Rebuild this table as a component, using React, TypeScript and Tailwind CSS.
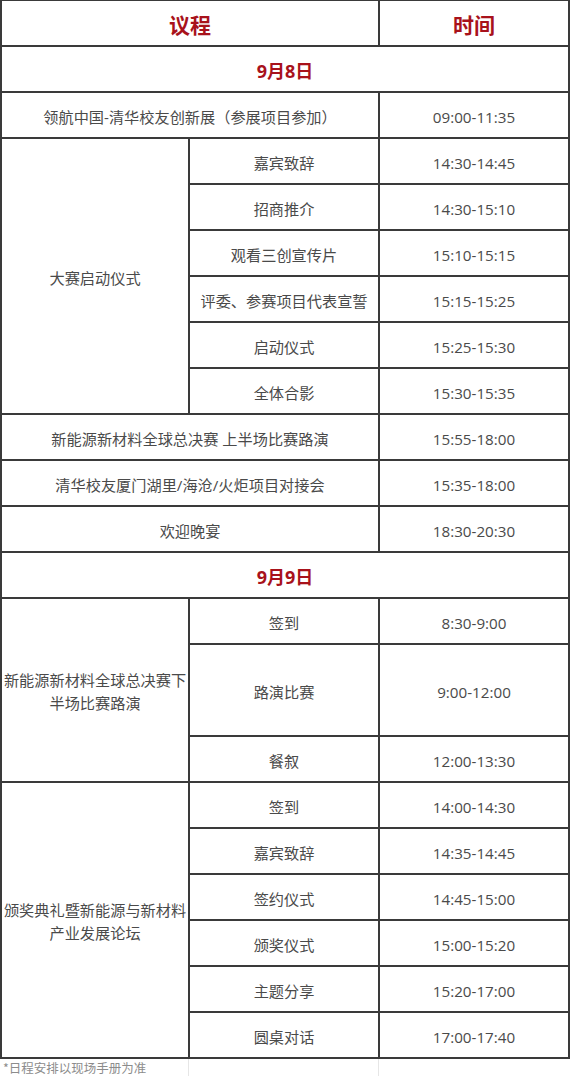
import React from "react";

const cell =
  "bg-white flex items-center justify-center text-center text-[15.2px] leading-[23px] text-[#4a4a4a] pt-[4px]";
const head =
  "bg-white flex items-center justify-center text-center text-[21px] font-bold text-[#a8121b] pt-[6px]";
const day =
  "bg-white flex items-center justify-center text-center text-[18px] font-bold text-[#a8121b] pt-[4px] col-span-3";

type Pair = [string, string];

const launch: Pair[] = [
  ["嘉宾致辞", "14:30-14:45"],
  ["招商推介", "14:30-15:10"],
  ["观看三创宣传片", "15:10-15:15"],
  ["评委、参赛项目代表宣誓", "15:15-15:25"],
  ["启动仪式", "15:25-15:30"],
  ["全体合影", "15:30-15:35"],
];

const award: Pair[] = [
  ["签到", "14:00-14:30"],
  ["嘉宾致辞", "14:35-14:45"],
  ["签约仪式", "14:45-15:00"],
  ["颁奖仪式", "15:00-15:20"],
  ["主题分享", "15:20-17:00"],
  ["圆桌对话", "17:00-17:40"],
];

export default function App() {
  return (
    <div
      className="w-[570px] h-[1076px] bg-white overflow-hidden"
      style={{ fontFamily: '"Open Sans", "Noto Sans CJK SC", sans-serif' }}
    >
      <div className="grid grid-cols-[186px_188px_188px] grid-rows-[repeat(23,44px)] gap-[2px] pt-[1px] px-[2px] pb-[2px] bg-[#3a3a3a]">
        <div className={`${head} col-span-2`}>议程</div>
        <div className={head}>时间</div>

        <div className={day}>9月8日</div>

        <div className={`${cell} col-span-2`}>领航中国-清华校友创新展（参展项目参加）</div>
        <div className={cell}>09:00-11:35</div>

        <div className={`${cell} row-span-6`}>大赛启动仪式</div>
        {launch.map(([a, t], i) => (
          <React.Fragment key={`l${i}`}>
            <div className={cell}>{a}</div>
            <div className={cell}>{t}</div>
          </React.Fragment>
        ))}

        <div className={`${cell} col-span-2`}>新能源新材料全球总决赛 上半场比赛路演</div>
        <div className={cell}>15:55-18:00</div>

        <div className={`${cell} col-span-2`}>清华校友厦门湖里/海沧/火炬项目对接会</div>
        <div className={cell}>15:35-18:00</div>

        <div className={`${cell} col-span-2`}>欢迎晚宴</div>
        <div className={cell}>18:30-20:30</div>

        <div className={day}>9月9日</div>

        <div className={`${cell} row-span-4`}>新能源新材料全球总决赛下半场比赛路演</div>
        <div className={cell}>签到</div>
        <div className={cell}>8:30-9:00</div>
        <div className={`${cell} row-span-2`}>路演比赛</div>
        <div className={`${cell} row-span-2`}>9:00-12:00</div>
        <div className={cell}>餐叙</div>
        <div className={cell}>12:00-13:30</div>

        <div className={`${cell} row-span-6`}>颁奖典礼暨新能源与新材料产业发展论坛</div>
        {award.map(([a, t], i) => (
          <React.Fragment key={`a${i}`}>
            <div className={cell}>{a}</div>
            <div className={cell}>{t}</div>
          </React.Fragment>
        ))}
      </div>

      <div className="grid grid-cols-[189px_190px_191px] h-[17px]">
        <div
          className="border-r border-[#e6e6e6] text-[12.5px] leading-[17px] text-[#8c8c8c] pl-[3px] whitespace-nowrap"
          style={{ fontFamily: '"Noto Sans CJK SC", sans-serif' }}
        >
          *日程安排以现场手册为准
        </div>
        <div className="border-r border-[#e6e6e6]"></div>
        <div></div>
      </div>
    </div>
  );
}
